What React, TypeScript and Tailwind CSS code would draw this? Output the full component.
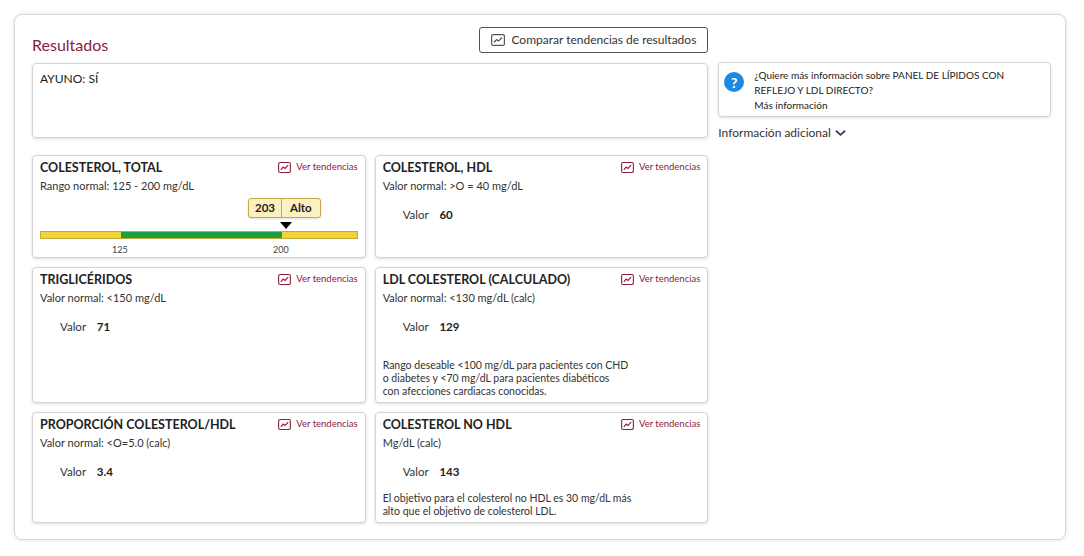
const Trend = ({ className = "" }: { className?: string }) => (
  <svg viewBox="0 0 14 12" className={className} fill="none" stroke="currentColor" strokeWidth="1.2">
    <rect x="0.6" y="0.6" width="12.8" height="10.8" rx="1.5" />
    <path d="M3 8.5 L5.5 5.5 L7.5 7 L11 3.5" />
  </svg>
);

const Card = ({ title, sub, children }: { title: string; sub: string; children?: React.ReactNode }) => (
  <div className="relative bg-white border border-[#d4d4d4] rounded shadow-[0_1px_3px_rgba(0,0,0,0.15)] px-[7px] pt-[2px] pb-2 min-h-full">
    <div className="flex items-start justify-between">
      <p className="text-[12.5px] font-bold text-[#222] leading-5">{title}</p>
      <span className="flex items-center gap-[5px] text-[9.5px] text-[#8b1c3d] mt-[2px]">
        <Trend className="w-[13px] h-[11px]" />Ver tendencias
      </span>
    </div>
    <p className="text-[11px] text-[#333] leading-4">{sub}</p>
    {children}
  </div>
);

const Valor = ({ v }: { v: string }) => (
  <p className="text-[11.5px] text-[#333] pl-5 mt-[12px]">Valor <b className="ml-2 text-[#222]">{v}</b></p>
);

export default function App() {
  return (
    <div className="w-[1084px] h-[556px] bg-white p-[14px] pr-[18px] pb-[16px]" style={{ fontFamily: "Lato, 'Noto Sans', sans-serif" }}>
      <div className="h-full border border-[#d6d6d6] rounded-lg shadow-[0_0_4px_rgba(0,0,0,0.12)] pl-[17px] pr-[14px] pt-[12px] flex gap-[10px]">
        <div className="w-[677px] flex flex-col">
          <div className="flex justify-between items-end h-[27px]">
            <h2 className="text-[16px] text-[#8b1c3d] leading-5 mb-[-1px]">Resultados</h2>
            <button className="h-[26px] px-[11px] border border-[#555] rounded-[3px] flex items-center gap-[6px] text-[12px] text-[#333] self-start">
              <Trend className="w-[14px] h-[12px] text-[#555]" />Comparar tendencias de resultados
            </button>
          </div>
          <div className="mt-[9px] h-[75px] border border-[#d4d4d4] rounded shadow-[0_1px_3px_rgba(0,0,0,0.15)] px-[7px] pt-[6px] text-[12px] text-[#222]">AYUNO: SÍ</div>
          <div className="mt-[17px] grid grid-cols-2 gap-[9px] grid-rows-[103px_136px_111px]">
            <Card title="COLESTEROL, TOTAL" sub="Rango normal: 125 - 200 mg/dL">
              <div className="relative h-[50px]">
                <div className="absolute left-[208px] top-[4px] flex h-[20px] border border-[#c9a84a] rounded-[3px] bg-[#fbf0c0] text-[11.5px] font-bold text-[#222] shadow-sm">
                  <span className="px-[6px] leading-[18px] border-r border-[#c9a84a]">203</span>
                  <span className="px-[8px] leading-[18px]">Alto</span>
                </div>
                <div className="absolute left-[240px] top-[28px] w-0 h-0 border-l-[6px] border-r-[6px] border-t-[7px] border-l-transparent border-r-transparent border-t-black" />
                <div className="absolute left-0 right-0 top-[37px] h-[8px] flex border border-[#bfae3c]">
                  <div className="w-[80px] bg-[#f2d43a]" />
                  <div className="w-[161px] bg-[#1fa040]" />
                  <div className="flex-1 bg-[#f2d43a]" />
                </div>
                <span className="absolute left-[72px] top-[49px] text-[9px] text-[#444]">125</span>
                <span className="absolute left-[233px] top-[49px] text-[9px] text-[#444]">200</span>
              </div>
            </Card>
            <Card title="COLESTEROL, HDL" sub="Valor normal: >O = 40 mg/dL"><Valor v="60" /></Card>
            <Card title="TRIGLICÉRIDOS" sub="Valor normal: <150 mg/dL"><Valor v="71" /></Card>
            <Card title="LDL COLESTEROL (CALCULADO)" sub="Valor normal: <130 mg/dL (calc)">
              <Valor v="129" />
              <p className="text-[10.5px] text-[#333] leading-[13px] mt-[24px]">Rango deseable &lt;100 mg/dL para pacientes con CHD<br />o diabetes y &lt;70 mg/dL para pacientes diabéticos<br />con afecciones cardiacas conocidas.</p>
            </Card>
            <Card title="PROPORCIÓN COLESTEROL/HDL" sub="Valor normal: <O=5.0 (calc)"><Valor v="3.4" /></Card>
            <Card title="COLESTEROL NO HDL" sub="Mg/dL (calc)">
              <Valor v="143" />
              <p className="text-[10.5px] text-[#333] leading-[13px] mt-[12px]">El objetivo para el colesterol no HDL es 30 mg/dL más<br />alto que el objetivo de colesterol LDL.</p>
            </Card>
          </div>
        </div>
        <div className="w-[333px] pt-[35px]">
          <div className="h-[55px] border border-[#d4d4d4] rounded shadow-[0_1px_3px_rgba(0,0,0,0.12)] flex items-start gap-[10px] pl-[5px] pt-[5px]">
            <span className="mt-[4px] w-[20px] h-[20px] shrink-0 rounded-full bg-[#1a8be0] text-white text-[14px] font-bold flex items-center justify-center">?</span>
            <div className="text-[10px] text-[#222] leading-[15px]">
              <p>¿Quiere más información sobre PANEL DE LÍPIDOS CON<br />REFLEJO Y LDL DIRECTO?</p>
              <p>Más información</p>
            </div>
          </div>
          <p className="mt-[7px] text-[12px] text-[#333] flex items-center gap-1">Información adicional
            <svg viewBox="0 0 12 8" className="w-[11px] h-[8px]" fill="none" stroke="#3b3b6b" strokeWidth="2"><path d="M1 1.5 L6 6 L11 1.5" /></svg>
          </p>
        </div>
      </div>
    </div>
  );
}
